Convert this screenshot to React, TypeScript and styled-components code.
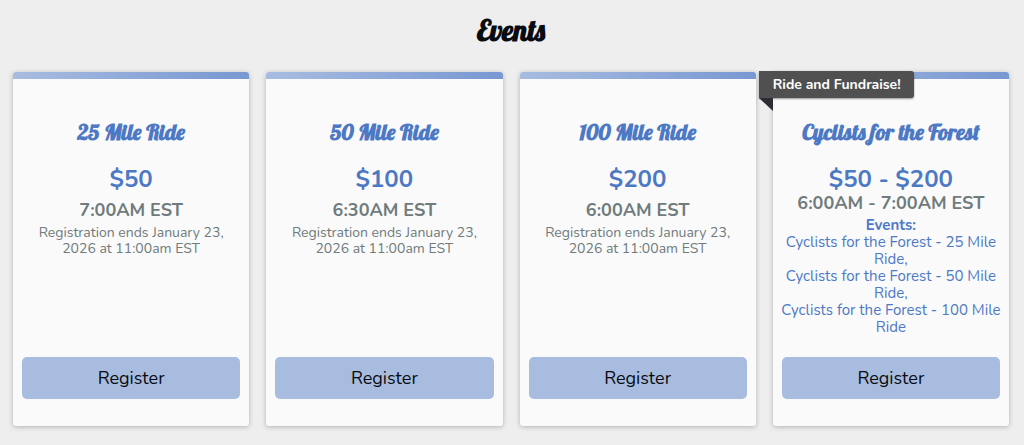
import React from "react";
import styled, { createGlobalStyle } from "styled-components";

const GlobalStyle = createGlobalStyle`
  *, *::before, *::after { box-sizing: border-box; }
  body {
    margin: 0;
    background: #eeeeee;
    font-family: Nunito, Lato, "Liberation Sans", sans-serif;
  }
`;

const displayFont = `Lobster, "Liberation Serif", serif`;
const blue = "#4d79c4";
const slate = "#6f7b7c";

const Page = styled.main`
  padding: 14px 15px 19px 13px;
`;

const PageTitle = styled.h1`
  margin: 0 0 26px;
  font: bold 29px/32px ${displayFont};
  text-align: center;
  color: #090c10;
`;

const CardGrid = styled.div`
  display: grid;
  grid-template-columns: repeat(4, minmax(0, 1fr));
  gap: 17px;
`;

const Card = styled.article`
  position: relative;
  display: flex;
  flex-direction: column;
  padding: 0 9px 27px;
  border-radius: 3px;
  background: #fafafa;
  box-shadow: 0 1px 5px rgba(0, 0, 0, 0.25);
  text-align: center;

  &::before {
    content: "";
    height: 7px;
    margin: 0 -9px 40px;
    border-radius: 3px 3px 0 0;
    background: linear-gradient(to right, #a8bce0, #7898d2);
  }
`;

const CardTitle = styled.h2`
  margin: 0 0 19px;
  font: bold 22px/26px ${displayFont};
  color: ${blue};
`;

const Price = styled.p`
  margin: 0;
  font-size: 24px;
  font-weight: 700;
  line-height: 30px;
  color: ${blue};
`;

const Time = styled.p<{ $spaced: boolean }>`
  margin: ${(p) => (p.$spaced ? "7px 0 6px" : "0 0 5px")};
  font-size: 18px;
  font-weight: 700;
  line-height: 18px;
  color: ${slate};
`;

const Deadline = styled.p`
  margin: 0;
  padding: 0 12px;
  font-size: 14px;
  line-height: 16px;
  color: ${slate};
`;

const Included = styled.div`
  margin: 0 -5px;
  font-size: 15px;
  line-height: 17px;
  color: ${blue};
`;

const IncludedTitle = styled.h3`
  margin: 0;
  font-size: inherit;
  font-weight: 700;
`;

const IncludedList = styled.ul`
  margin: 0;
  padding: 0;
  list-style: none;
`;

const Footer = styled.div`
  display: flex;
  margin-top: auto;
  padding-top: 21px;
`;

const RegisterButton = styled.button`
  flex: 1;
  padding: 10px;
  border: 0;
  border-radius: 5px;
  background: #a8bce0;
  font: 18px/22px Nunito, Lato, "Liberation Sans", sans-serif;
  color: #090c10;
  cursor: pointer;
`;

const Ribbon = styled.div`
  position: absolute;
  top: -1px;
  left: -14px;
  padding: 5px 13px 4px 14px;
  border-radius: 0 3px 3px 0;
  background: #505050;
  box-shadow: 0 1px 2px rgba(0, 0, 0, 0.4);
  font-size: 14px;
  font-weight: 700;
  line-height: 18px;
  white-space: nowrap;
  color: #ffffff;

  &::after {
    content: "";
    position: absolute;
    top: 100%;
    left: 0;
    border-top: 13px solid #2b2d37;
    border-left: 14px solid transparent;
  }
`;

interface RideEvent {
  name: string;
  price: string;
  time: string;
  deadline?: string;
  ribbon?: string;
  included?: string[];
}

const deadline = "Registration ends January 23, 2026 at 11:00am EST";

const events: RideEvent[] = [
  { name: "25 Mile Ride", price: "$50", time: "7:00AM EST", deadline },
  { name: "50 Mile Ride", price: "$100", time: "6:30AM EST", deadline },
  { name: "100 Mile Ride", price: "$200", time: "6:00AM EST", deadline },
  {
    name: "Cyclists for the Forest",
    price: "$50 - $200",
    time: "6:00AM - 7:00AM EST",
    ribbon: "Ride and Fundraise!",
    included: [
      "Cyclists for the Forest - 25 Mile Ride,",
      "Cyclists for the Forest - 50 Mile Ride,",
      "Cyclists for the Forest - 100 Mile Ride",
    ],
  },
];

export default function App() {
  return (
    <>
      <GlobalStyle />
      <Page>
        <PageTitle>Events</PageTitle>
        <CardGrid>
          {events.map((event) => (
            <Card key={event.name}>
              {event.ribbon && <Ribbon>{event.ribbon}</Ribbon>}
              <CardTitle>{event.name}</CardTitle>
              <Price>{event.price}</Price>
              <Time $spaced={!event.included}>{event.time}</Time>
              {event.deadline && <Deadline>{event.deadline}</Deadline>}
              {event.included && (
                <Included>
                  <IncludedTitle>Events:</IncludedTitle>
                  <IncludedList>
                    {event.included.map((item) => (
                      <li key={item}>{item}</li>
                    ))}
                  </IncludedList>
                </Included>
              )}
              <Footer>
                <RegisterButton type="button">Register</RegisterButton>
              </Footer>
            </Card>
          ))}
        </CardGrid>
      </Page>
    </>
  );
}
